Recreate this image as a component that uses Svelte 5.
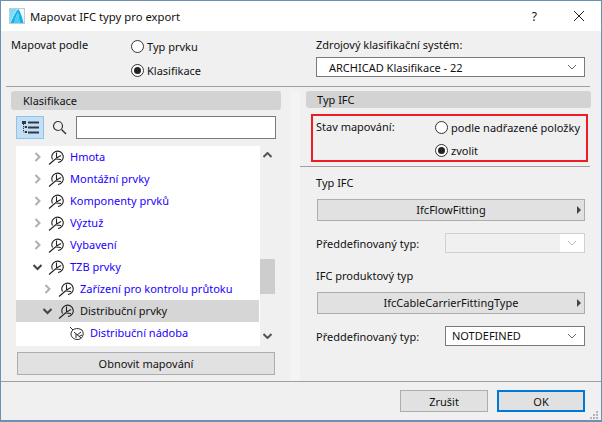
<script>
  const tree = [
    { label: 'Hmota', depth: 0, arrow: 'closed' },
    { label: 'Montážní prvky', depth: 0, arrow: 'closed' },
    { label: 'Komponenty prvků', depth: 0, arrow: 'closed' },
    { label: 'Výztuž', depth: 0, arrow: 'closed' },
    { label: 'Vybavení', depth: 0, arrow: 'closed' },
    { label: 'TZB prvky', depth: 0, arrow: 'open' },
    { label: 'Zařízení pro kontrolu průtoku', depth: 1, arrow: 'closed' },
    { label: 'Distribuční prvky', depth: 1, arrow: 'open', selected: true },
    { label: 'Distribuční nádoba', depth: 2, arrow: 'none', leaf: true }
  ];
</script>

<div class="window">
  <header class="title">
    <svg class="logo" width="16" height="16" viewBox="0 0 16 16">
      <rect x="0.5" y="0.5" width="15" height="15" fill="#f4f6f7" stroke="#c4cbcf" />
      <path d="M1 15 C4 8 6 3 9 1 L1 1 Z" fill="#7fdcf8" />
      <path d="M1.5 15 C4.5 8 7 3 9.5 1 C12 5 13.5 10 14.5 15 L10.5 15 C10 10 9.5 7 9 5 C7 8 6 11 5.5 15 Z" fill="#16b2ea" />
      <path d="M5.5 15 C6 11 7 8 9 5 C9.5 7 10 10 10.5 15 Z" fill="#4ccbf3" />
    </svg>
    <span class="title-text">Mapovat IFC typy pro export</span>
    <span class="help">?</span>
    <svg class="close" width="12" height="12" viewBox="0 0 12 12">
      <path d="M1 1 L11 11 M11 1 L1 11" stroke="#222" stroke-width="1" fill="none" />
    </svg>
  </header>

  <section class="top">
    <div class="map-by">
      <span class="map-label">Mapovat podle</span>
      <div class="radios">
        <div class="radio"><i class="dot"></i>Typ prvku</div>
        <div class="radio"><i class="dot on"></i>Klasifikace</div>
      </div>
    </div>
    <div class="source">
      <span>Zdrojový klasifikační systém:</span>
      <div class="select strong">
        <span>ARCHICAD Klasifikace - 22</span>
        <svg class="chev" width="10" height="6" viewBox="0 0 10 6"><path d="M1 1 L5 5 L9 1" fill="none" stroke="#666" /></svg>
      </div>
    </div>
  </section>

  <hr class="rule top-rule" />

  <main class="columns">
    <section class="left">
      <h2 class="band">Klasifikace</h2>
      <div class="tools">
        <button class="tool" aria-label="Strom">
          <svg width="17" height="13" viewBox="0 0 17 13" fill="#2b3a4a">
            <rect x="0" y="0" width="4" height="3" />
            <rect x="6" y="0.5" width="11" height="2" />
            <rect x="6" y="5.5" width="11" height="2" />
            <rect x="6" y="10.5" width="11" height="2" />
            <rect x="3" y="5" width="2" height="2" />
            <rect x="3" y="10" width="2" height="2" />
            <path d="M1.5 3 V11 H3 M1.5 6 H3" fill="none" stroke="#2b3a4a" stroke-dasharray="1 1" />
          </svg>
        </button>
        <svg class="search" width="15" height="15" viewBox="0 0 15 15">
          <circle cx="6" cy="6" r="4.5" fill="none" stroke="#333" stroke-width="1.2" />
          <path d="M9.5 9.5 L14 14" stroke="#333" stroke-width="1.4" />
        </svg>
        <div class="field"></div>
      </div>
      <div class="tree-wrap">
        <ul class="tree">
          {#each tree as row}
            <li class="row depth-{row.depth}" class:selected={row.selected}>
              {#if row.arrow === 'closed'}
                <svg class="arrow" width="9" height="10" viewBox="0 0 9 10"><path d="M0.5 1 L4.5 5 L0.5 9" fill="none" stroke="#b0b0b0" stroke-width="2" /></svg>
              {:else if row.arrow === 'open'}
                <svg class="arrow open" width="9" height="10" viewBox="0 0 9 10"><path d="M0.5 3 L4.5 7 L8.5 3" fill="none" stroke="#444" stroke-width="2" /></svg>
              {:else}
                <span class="arrow"></span>
              {/if}
              {#if row.leaf}
                <svg class="node leaf" width="16" height="15" viewBox="0 0 16 15">
                  <path d="M1 1 L4 4 M2 8 C2 3 8 1 13 4 C16 8 13 14 8 13.5 C5 13.5 2 11 2 8 Z M5 6 L12 12 M8 9 L12 6 M7 8 L7 12 M10 10.5 L13 9" fill="none" stroke="#2a2a2a" stroke-width="1" />
                </svg>
              {:else}
                <svg class="node" width="16" height="15" viewBox="0 0 16 15">
                  <path d="M4.5 9.5 A5.7 5.7 0 1 1 10 12.5 M1 14.5 L8 8.5 M8.5 2.5 V8 M8.5 8 L13 5.5 M8 9 L13 9.5" fill="none" stroke="#222" stroke-width="1.1" />
                </svg>
              {/if}
              <span class="label">{row.label}</span>
            </li>
          {/each}
        </ul>
        <div class="scrollbar">
          <svg width="9" height="6" viewBox="0 0 9 6"><path d="M0.5 5 L4.5 1 L8.5 5" fill="none" stroke="#555" stroke-width="2" /></svg>
          <div class="thumb"></div>
          <svg width="9" height="6" viewBox="0 0 9 6"><path d="M0.5 1 L4.5 5 L8.5 1" fill="none" stroke="#555" stroke-width="2" /></svg>
        </div>
      </div>
      <button class="btn refresh">Obnovit mapování</button>
    </section>

    <section class="right">
      <h2 class="band short">Typ IFC</h2>
      <div class="state">
        <span class="state-label">Stav mapování:</span>
        <div class="state-radios">
          <div class="radio"><i class="dot"></i>podle nadřazené položky</div>
          <div class="radio"><i class="dot on"></i>zvolit</div>
        </div>
      </div>
      <hr class="rule inner" />
      <div class="group-label first">Typ IFC</div>
      <button class="btn wide">
        <span>IfcFlowFitting</span>
        <i class="tri"></i>
      </button>
      <div class="pair">
        <span>Předdefinovaný typ:</span>
        <div class="select off">
          <span class="off-fill"></span>
          <svg class="chev" width="10" height="6" viewBox="0 0 10 6"><path d="M1 1 L5 5 L9 1" fill="none" stroke="#bbb" /></svg>
        </div>
      </div>
      <div class="group-label">IFC produktový typ</div>
      <button class="btn wide">
        <span>IfcCableCarrierFittingType</span>
        <i class="tri"></i>
      </button>
      <div class="pair">
        <span>Předdefinovaný typ:</span>
        <div class="select strong">
          <span>NOTDEFINED</span>
          <svg class="chev" width="10" height="6" viewBox="0 0 10 6"><path d="M1 1 L5 5 L9 1" fill="none" stroke="#666" /></svg>
        </div>
      </div>
    </section>
  </main>

  <footer class="foot">
    <button class="btn action">Zrušit</button>
    <button class="btn action ok">OK</button>
    <svg class="grip" width="10" height="9" viewBox="0 0 10 9" fill="#b4b4b4">
      <rect x="7" y="0" width="2" height="2" />
      <rect x="4" y="3" width="2" height="2" />
      <rect x="7" y="3" width="2" height="2" />
      <rect x="1" y="6" width="2" height="2" />
      <rect x="4" y="6" width="2" height="2" />
      <rect x="7" y="6" width="2" height="2" />
    </svg>
  </footer>
</div>

<style>
  :global(body) {
    margin: 0;
    background: #f0f0f0;
  }

  .window {
    width: 602px;
    height: 422px;
    box-sizing: border-box;
    border: 1px solid #6c90b0;
    border-bottom-width: 2px;
    background: #f0f0f0;
    display: flex;
    flex-direction: column;
    font-family: "Noto Sans", "Open Sans", sans-serif;
    font-size: 11px;
    color: #111;
    overflow: hidden;
  }

  .title {
    height: 30px;
    background: #fff;
    display: flex;
    align-items: center;
    padding-left: 8px;
    flex-shrink: 0;
  }

  .title-text {
    margin-left: 5px;
    font-size: 11.3px;
    flex: 1;
  }

  .help {
    font-size: 12px;
    margin-right: 36px;
  }

  .close {
    margin-right: 16px;
  }

  .top {
    height: 55px;
    display: flex;
    flex-shrink: 0;
  }

  .map-by {
    width: 315px;
    display: flex;
    padding: 6px 0 0 10px;
    box-sizing: border-box;
  }

  .map-label {
    width: 120px;
  }

  .radio {
    display: flex;
    align-items: center;
    height: 24px;
  }

  .radios {
    margin-top: -3px;
  }

  .dot {
    width: 11px;
    height: 11px;
    border: 1px solid #333;
    border-radius: 50%;
    background: #fff;
    margin-right: 3px;
    flex-shrink: 0;
    display: flex;
    align-items: center;
    justify-content: center;
  }

  .dot.on::after {
    content: "";
    width: 7px;
    height: 7px;
    border-radius: 50%;
    background: #222;
  }

  .source {
    flex: 1;
    padding-top: 6px;
  }

  .source .select {
    width: 269px;
    margin-top: 5px;
  }

  .select {
    height: 20px;
    box-sizing: border-box;
    border: 1px solid #7a7a7a;
    background: #fff;
    display: flex;
    align-items: center;
    justify-content: space-between;
    padding: 0 7px 0 12px;
  }

  .select.off {
    border-color: #d0d0d0;
    background: #f0f0f0;
    padding: 0;
  }

  .off-fill {
    flex: 1;
  }

  .select.off .chev {
    background: #fff;
    box-sizing: content-box;
    padding: 6px 7px 6px 7px;
  }

  .rule {
    border: none;
    border-top: 1px solid #a0a0a0;
    margin: 0 11px 0 5px;
    flex-shrink: 0;
  }

  .columns {
    flex: 1;
    display: flex;
    min-height: 0;
    padding-top: 4px;
  }

  .left {
    width: 299px;
    padding-left: 10px;
    box-sizing: border-box;
    border-right: 9px solid #f4f4f4;
    margin-right: 6px;
  }

  .band {
    margin: 0;
    font: inherit;
    height: 19px;
    line-height: 20px;
    background: #d3d3d3;
    border-radius: 3px;
    padding-left: 12px;
    width: 270px;
    box-sizing: border-box;
  }

  .band.short {
    height: 17px;
    line-height: 18px;
    padding-left: 11px;
    width: 285px;
  }

  .tools {
    display: flex;
    align-items: center;
    padding: 6px 0 0 5px;
  }

  .tool {
    width: 28px;
    height: 23px;
    padding: 0;
    border: 1px solid #8cc4f0;
    background: #c4def3;
    display: flex;
    align-items: center;
    justify-content: center;
  }

  .search {
    margin: 0 9px 0 8px;
  }

  .field {
    width: 200px;
    height: 23px;
    box-sizing: border-box;
    border: 1px solid #7a7a7a;
    background: #fff;
  }

  .tree-wrap {
    display: flex;
    margin: 7px 0 0 5px;
    height: 200px;
  }

  .tree {
    list-style: none;
    margin: 0;
    padding: 0;
    width: 244px;
    background: #fff;
  }

  .row {
    height: 22px;
    display: flex;
    align-items: center;
    color: #1a00ff;
    margin-right: 1px;
  }

  .row.selected {
    background: #d6d6d6;
    color: #111;
  }

  .label {
    padding-bottom: 2px;
  }

  .depth-0 { padding-left: 19px; }
  .depth-1 { padding-left: 29px; }
  .depth-2 { padding-left: 39px; }

  .arrow {
    width: 9px;
    display: block;
    flex-shrink: 0;
  }

  .arrow.open {
    margin-left: -2px;
    margin-right: 2px;
  }

  .node {
    margin: 0 6px 0 4px;
    flex-shrink: 0;
  }

  .node.leaf {
    margin: 0 5px;
  }

  .scrollbar {
    width: 15px;
    display: flex;
    flex-direction: column;
    align-items: center;
    padding-top: 6px;
    box-sizing: border-box;
  }

  .thumb {
    width: 15px;
    height: 35px;
    background: #cdcdcd;
    margin-top: 101px;
    margin-bottom: 39px;
  }

  .btn {
    font: inherit;
    color: #111;
    background: #e1e1e1;
    border: 1px solid #adadad;
    padding: 0;
    display: flex;
    align-items: center;
    justify-content: center;
  }

  .refresh {
    width: 258px;
    height: 23px;
    margin: 6px 0 0 6px;
  }

  .right {
    flex: 1;
  }

  .state {
    width: 277px;
    height: 48px;
    box-sizing: border-box;
    border: 2px solid #ee1c25;
    margin: 6px 0 0 5px;
    display: flex;
    padding-left: 3px;
  }

  .state-label {
    width: 119px;
    padding-top: 3px;
  }

  .state-radios .radio {
    height: 23px;
  }

  .rule.inner {
    margin: 4px 0 0 -6px;
    width: 290px;
  }

  .group-label {
    margin: 15px 0 0 10px;
    height: 16px;
  }

  .group-label.first {
    margin-top: 8px;
  }

  .wide {
    width: 268px;
    height: 22px;
    margin: 8px 0 0 11px;
    padding-bottom: 2px;
    position: relative;
  }

  .tri {
    position: absolute;
    right: 3px;
    top: 6px;
    border-left: 4px solid #444;
    border-top: 4px solid transparent;
    border-bottom: 4px solid transparent;
  }

  .pair {
    display: flex;
    align-items: center;
    justify-content: space-between;
    width: 268px;
    margin: 12px 0 0 11px;
  }

  .pair span:first-child {
    margin-left: -1px;
  }

  .pair .select {
    width: 140px;
    padding-left: 6px;
  }

  .pair .select.off {
    padding: 0;
  }

  .pair .select span:first-child {
    margin: 0 0 2px 0;
  }

  .foot {
    height: 39px;
    flex-shrink: 0;
    border-top: 1px solid #a0a0a0;
    display: flex;
    justify-content: flex-end;
    gap: 9px;
    padding: 8px 16px 0 0;
    box-sizing: border-box;
    position: relative;
  }

  .action {
    width: 88px;
    height: 22px;
  }

  .ok {
    border: 2px solid #0078d7;
  }

  .grip {
    position: absolute;
    right: 2px;
    bottom: 0;
  }
</style>
